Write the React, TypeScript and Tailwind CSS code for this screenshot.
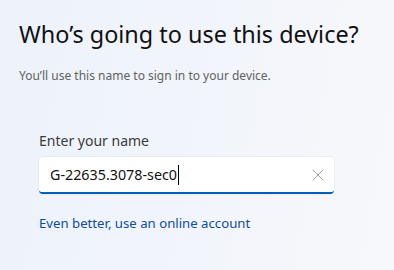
import { X } from "lucide-react";

export default function App() {
  return (
    <div
      className="w-[394px] h-[270px] overflow-hidden bg-[linear-gradient(100deg,#edf2fb_0%,#f2f5fb_55%,#f7f8fb_100%)] text-[#1b1b1b]"
      style={{ fontFamily: '"Segoe UI", "Noto Sans", "Open Sans", sans-serif' }}
    >
      {/* Header */}
      <div className="pl-[19px] pt-[19px]">
        <h1 className="text-[23.4px] leading-[30px] font-normal text-[#111]">Who’s going to use this device?</h1>
        <p className="mt-[19px] text-[12px] leading-[16px] text-[#616161]">You’ll use this name to sign in to your device.</p>
      </div>

      {/* Name field */}
      <div className="pl-[39px] pt-[48px] w-[334px]">
        <label className="block text-[14px] leading-[18px] text-[#3a3a3a]">Enter your name</label>
        <div className="mt-[7px] h-[37px] flex items-center bg-white rounded-[4px] border-b-2 border-[#005fb8] shadow-[0_0_0_1px_rgba(0,0,0,0.04)] pl-[11px] pr-[6px]">
          <span className="text-[14.3px] text-[#111]">G-22635.3078-sec0</span>
          <span className="w-px h-[20px] bg-black ml-px" />
          <span className="flex-1" />
          <X className="w-[20px] h-[20px] text-[#8a8a8a]" strokeWidth={1} />
        </div>
        <a className="block mt-[21px] text-[13.2px] leading-[17px] text-[#0f4c9c]">Even better, use an online account</a>
      </div>
    </div>
  );
}
